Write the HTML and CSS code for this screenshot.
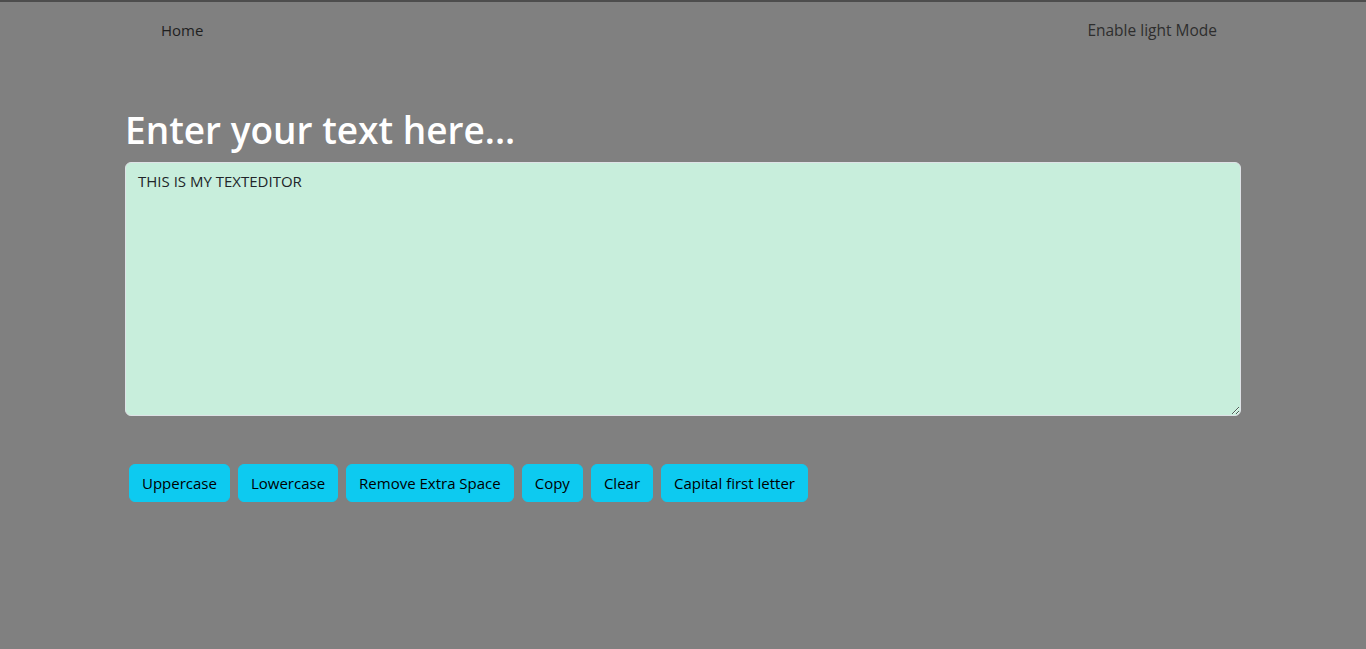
FILE: index.html
```html
<!DOCTYPE html>
<html lang="en">
<head>
<meta charset="utf-8">
<title>TextUtils</title>
<link rel="stylesheet" href="styles.css">
</head>
<body>
<nav class="navbar">
  <div class="nav-inner">
    <a class="nav-link home" href="#">Home</a>
    <span class="mode-label">Enable light Mode</span>
  </div>
</nav>
<main class="container">
  <h1 class="title">Enter your text here...</h1>
  <textarea class="editor" rows="10">THIS IS MY TEXTEDITOR</textarea>
  <div class="actions">
    <button class="btn">Uppercase</button>
    <button class="btn">Lowercase</button>
    <button class="btn">Remove Extra Space</button>
    <button class="btn">Copy</button>
    <button class="btn">Clear</button>
    <button class="btn">Capital first letter</button>
  </div>
</main>
</body>
</html>
```

FILE: styles.css
```css
* { box-sizing: border-box; }
html, body { height: 100%; }
body {
  margin: 0;
  background: #808080;
  border-top: 2px solid #4d4d4d;
  font-family: "Open Sans", "Noto Sans", sans-serif;
  font-size: 15px;
  color: #212529;
}
.navbar {
  height: 56px;
}
.nav-inner {
  display: flex;
  justify-content: space-between;
  align-items: center;
  height: 56px;
  padding: 4px 149px 0 161px;
  margin-top: -2px;
}
.nav-link {
  color: #1f1f1f;
  text-decoration: none;
  line-height: 24px;
}
.mode-label {
  color: #2e2e2e;
  line-height: 24px;
  font-size: 15.5px;
}
.container {
  width: 1116px;
  margin: 0 auto 0 125px;
  padding-top: 50px;
}
.title {
  margin: 0 0 8px;
  font-size: 37px;
  font-weight: 600;
  line-height: 48px;
  color: #ffffff;
  letter-spacing: 0;
}
.editor {
  display: block;
  width: 1116px;
  height: 254px;
  padding: 6px 12px;
  font-family: inherit;
  font-size: 15px;
  line-height: 24px;
  color: #212529;
  background: #c8eedc;
  border: 1px solid #dee2e6;
  border-radius: 6px;
  resize: vertical;
}
.actions {
  display: flex;
  gap: 8px;
  padding: 48px 4px 0;
}
.btn {
  height: 38px;
  padding: 6px 12px;
  font-family: inherit;
  font-size: 15px;
  line-height: 24px;
  color: #000;
  background: #0dcaf0;
  border: 1px solid #0dcaf0;
  border-radius: 6px;
  cursor: pointer;
}
```
